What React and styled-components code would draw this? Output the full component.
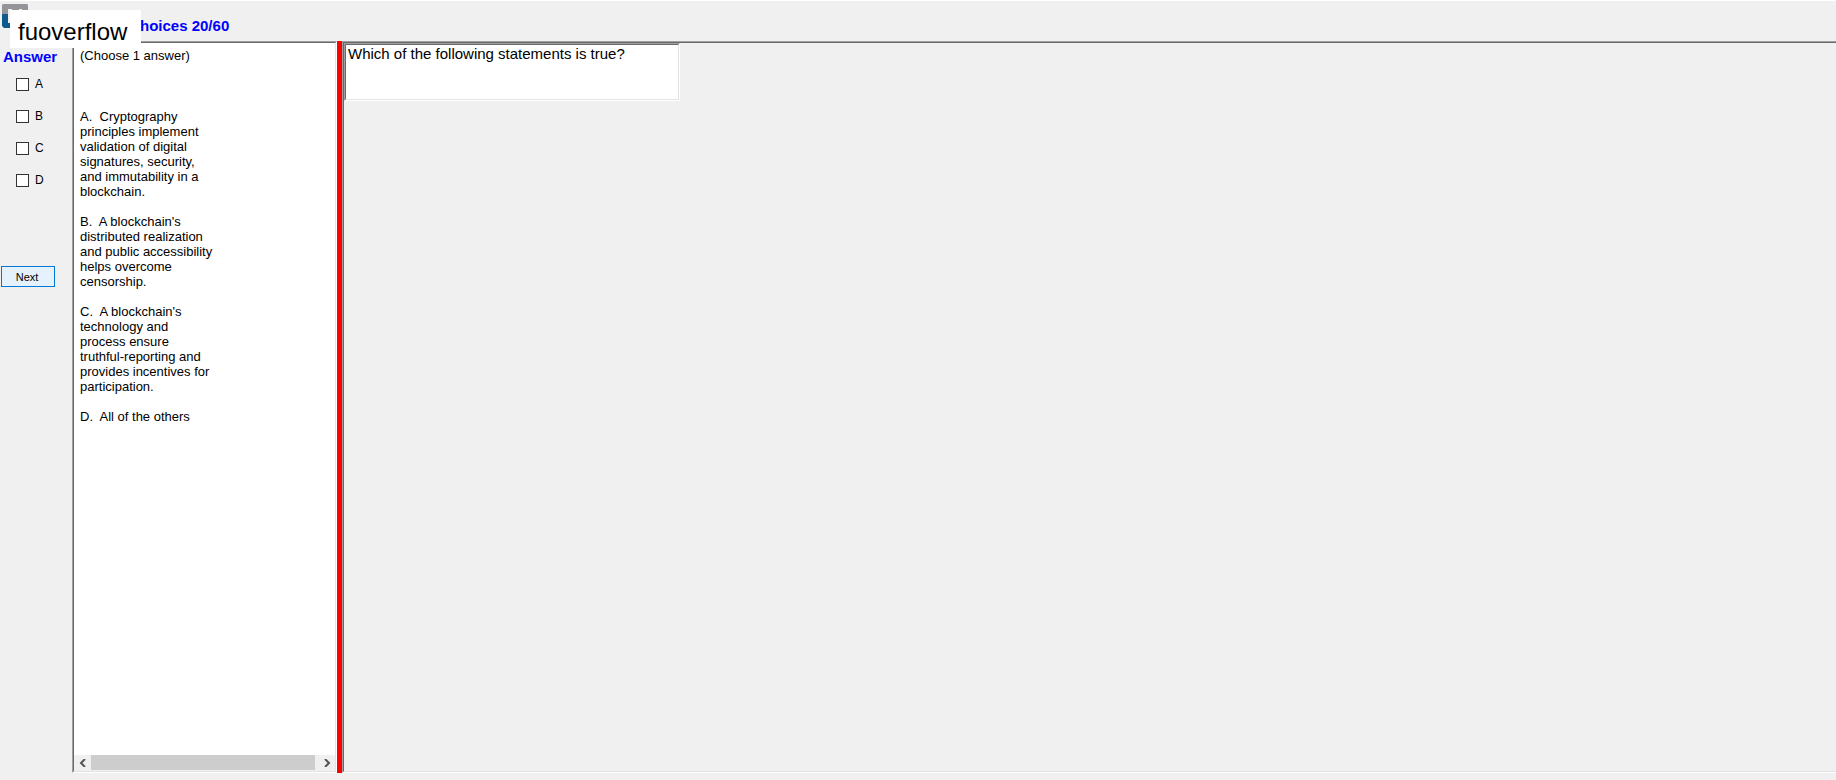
import React, { useState } from "react";
import styled, { createGlobalStyle } from 'styled-components'

const GlobalStyle = createGlobalStyle`
  * {
    box-sizing: border-box;
  }
  body {
    margin: 0;
    background: #f0f0f0;
    color: #000;
    font-family: "Liberation Sans", Arial, sans-serif;
    font-size: 13px;
    line-height: 15px;
  }
`

const Page = styled.div`
  display: flex;
  flex-direction: column;
  height: 100vh;
  overflow: hidden;
  border-top: 1px solid #fff;
  padding-bottom: 7px;
`

const Header = styled.header`
  position: relative;
  flex: none;
  height: 40px;
  padding: 2px;
`

const Heading = styled.h1`
  margin: 0;
  padding: 15px 0 0 138px;
  color: #0000ff;
  font-size: 15px;
  line-height: 16px;
`

const Logo = styled.svg`
  position: absolute;
  left: 2px;
  top: 2px;
`

const Watermark = styled.div`
  position: absolute;
  z-index: 2;
  left: 10px;
  top: 9px;
  padding: 10px 14px 4px 8px;
  background: #fff;
  font-size: 24px;
  line-height: 24px;
`

const Main = styled.main`
  display: flex;
  flex: 1;
  min-height: 0;
`

const AnswerBar = styled.form`
  flex: none;
  display: flex;
  flex-direction: column;
  align-items: flex-start;
  width: 72px;
`

const AnswerTitle = styled.h2`
  margin: 0 0 11px;
  padding: 8px 0 0 3px;
  color: #0000ff;
  font-size: 15px;
  line-height: 16px;
`

const Choice = styled.label`
  display: flex;
  align-items: center;
  gap: 6px;
  height: 16px;
  margin-bottom: 16px;
  padding-left: 16px;
  font-size: 12px;
`

const Tick = styled.input`
  appearance: none;
  width: 13px;
  height: 13px;
  margin: 0;
  border: 1px solid #333;
  background: ${({ checked }) => (checked ? '#0078d7' : '#fff')};
`

const NextButton = styled.button`
  width: 54px;
  height: 21px;
  margin: 62px 0 0 1px;
  padding: 0 2px 0 0;
  border: 1px solid #0078d7;
  background: #e5f1fb;
  font-family: inherit;
  font-size: 11px;
`

const Sunken = styled.section`
  border: 1px solid;
  border-color: #a0a0a0 #fff #fff #a0a0a0;
`

const SunkenInner = styled.div`
  display: flex;
  flex-direction: column;
  height: 100%;
  border: 1px solid;
  border-color: #696969 #e3e3e3 #e3e3e3 #696969;
  border-right-width: ${({ $open }) => ($open ? '0' : '1px')};
  background: ${({ $white }) => ($white ? '#fff' : '#f0f0f0')};
`

const ChoicesPanel = styled(Sunken)`
  flex: none;
  width: 265px;
`

const ChoicesText = styled.div`
  flex: 1;
  width: 150px;
  padding: 5px 0 0 6px;
`

const Hint = styled.p`
  margin: 0 0 46px;
`

const Option = styled.p`
  margin: 0 0 15px;
  white-space: pre-line;
`

const ScrollBar = styled.div`
  display: flex;
  height: 16px;
  background: #f0f0f0;
`

const ScrollButton = styled.button`
  display: flex;
  align-items: center;
  justify-content: center;
  width: 17px;
  padding: 0;
  border: 0;
  background: none;
`

const ScrollTrack = styled.div`
  flex: 1;
  padding: 0 3px 1px 0;
`

const ScrollThumb = styled.div`
  height: 100%;
  background: #cdcdcd;
`

const Splitter = styled.div`
  flex: none;
  width: 5px;
  background: #f00;
`

const QuestionPanel = styled(Sunken)`
  flex: 1;
  border-right: 0;
`

const QuestionBox = styled(Sunken)`
  width: 336px;
  height: 58px;
`

const Question = styled.p`
  margin: 0;
  padding: 0 2px;
  font-size: 15px;
  line-height: 18px;
`

const options = [
  { id: 'A', text: 'Cryptography\nprinciples implement\nvalidation of digital\nsignatures, security,\nand immutability in a\nblockchain.' },
  { id: 'B', text: "A blockchain's\ndistributed realization\nand public accessibility\nhelps overcome\ncensorship." },
  { id: 'C', text: "A blockchain's\ntechnology and\nprocess ensure\ntruthful-reporting and\nprovides incentives for\nparticipation." },
  { id: 'D', text: 'All of the others' },
]

const Chevron = ({ d }) => (
  <svg width="8" height="8" viewBox="0 0 8 8" fill="none" stroke="#555" strokeWidth="2" aria-hidden="true">
    <path d={d} />
  </svg>
)

const App = () => {
  const [picked, setPicked] = useState([])

  const toggle = (id) => {
    setPicked(picked.includes(id) ? picked.filter((p) => p !== id) : [...picked, id])
  }

  return (
    <>
      <GlobalStyle />
      <Page>
        <Header>
          <Logo width="26" height="25" viewBox="0 0 26 25" aria-hidden="true">
            <path d="M1 1H25L26 2V12H20V6H17V8H10V6H6V11H0V2Z" fill="#939598" />
            <path d="M0 11H6V20H10V25H2L0 23Z" fill="#0d5a8c" />
          </Logo>
          <Heading>hoices 20/60</Heading>
          <Watermark>fuoverflow</Watermark>
        </Header>
        <Main>
          <AnswerBar onSubmit={(e) => e.preventDefault()}>
            <AnswerTitle>Answer</AnswerTitle>
            {options.map(({ id }) => (
              <Choice key={id}>
                <Tick type="checkbox" checked={picked.includes(id)} onChange={() => toggle(id)} />
                {id}
              </Choice>
            ))}
            <NextButton type="submit">Next</NextButton>
          </AnswerBar>
          <ChoicesPanel>
            <SunkenInner $white>
              <ChoicesText>
                <Hint>(Choose 1 answer)</Hint>
                {options.map(({ id, text }) => (
                  <Option key={id}>{`${id}.\u00a0 ${text}`}</Option>
                ))}
              </ChoicesText>
              <ScrollBar>
                <ScrollButton type="button" aria-label="Scroll left"><Chevron d="M6 0L2 4L6 8" /></ScrollButton>
                <ScrollTrack><ScrollThumb /></ScrollTrack>
                <ScrollButton type="button" aria-label="Scroll right"><Chevron d="M2 0L6 4L2 8" /></ScrollButton>
              </ScrollBar>
            </SunkenInner>
          </ChoicesPanel>
          <Splitter />
          <QuestionPanel>
            <SunkenInner $open>
              <QuestionBox>
                <SunkenInner $white>
                  <Question>Which of the following statements is true?</Question>
                </SunkenInner>
              </QuestionBox>
            </SunkenInner>
          </QuestionPanel>
        </Main>
      </Page>
    </>
  )
}

export default App
